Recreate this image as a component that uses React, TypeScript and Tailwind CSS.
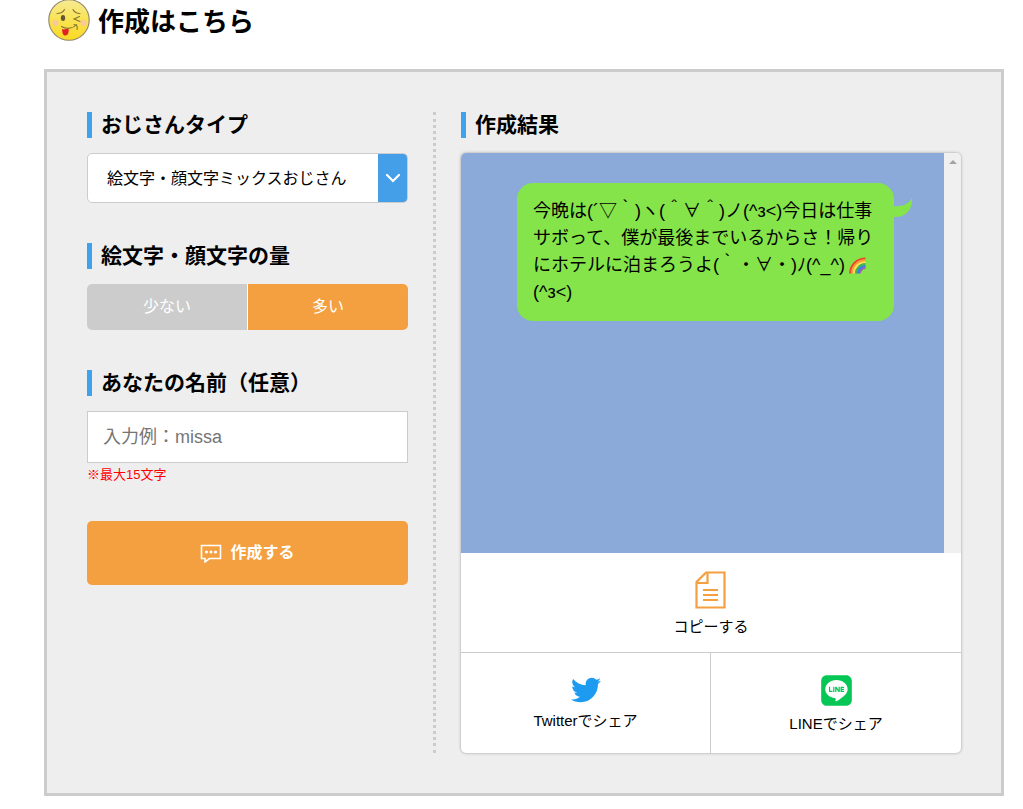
import { useState } from 'react';
import type { ReactNode } from 'react';
import { FaLine, FaTwitter } from 'react-icons/fa';

const OJISAN_TYPES = [
  '絵文字・顔文字ミックスおじさん',
  '絵文字おじさん',
  '顔文字おじさん',
];

const RESULT_LINES = [
  '今晩は(´▽｀)ヽ(＾∀＾)ノ(^з<)今日は仕事',
  'サボって、僕が最後までいるからさ！帰り',
  'にホテルに泊まろうよ(｀・∀・)ﾉ(^_^)',
  '(^з<)',
];

function FaceIcon() {
  return (
    <svg viewBox="0 0 42 42" className="size-[42px] shrink-0" aria-hidden="true">
      <defs>
        <linearGradient id="face" x1="0" y1="0" x2="0" y2="1">
          <stop offset="0" stopColor="#f6ea94" />
          <stop offset="0.5" stopColor="#f9e352" />
          <stop offset="1" stopColor="#fbd823" />
        </linearGradient>
      </defs>
      <circle cx="21" cy="20" r="20.2" fill="url(#face)" stroke="#8f8468" strokeWidth="1.1" />
      <circle cx="7.500" cy="23" r="3" fill="#fbc6a0" />
      <circle cx="35.500" cy="23" r="3" fill="#fbc6a0" />
      <ellipse cx="15" cy="18" rx="2.2" ry="3" fill="#655735" />
      <g fill="none" stroke="#87743a" strokeWidth="1.1" strokeLinecap="round">
        <path d="M9 13.500c3 0 6-1 7.500-4" />
        <path d="M25 9.500c1.500 3 4 4 7 4" />
        <path d="M31.500 16.500l-5.500 2.500 6 2.500" />
        <path d="M13.500 26.500c5 3 12 2 15-2M26 24.500c2.500 0 4 2 3 5" />
      </g>
      <path d="M14 29c2 1 4 0 6.500-.5.6 3-.2 7-3 7-2.600 0-3-2-3.500-6.500z" fill="#e01f26" />
    </svg>
  );
}

function CommentIcon() {
  return (
    <svg viewBox="0 0 22 19" className="h-[19px] w-[22px]" aria-hidden="true">
      <path d="M1.500 1.500h19v13H9.500l-4.500 3.500v-3.500H1.500z" fill="none" stroke="#fff" strokeWidth="1.6" />
      <g fill="#fff">
        <circle cx="6.500" cy="8" r="1.600" />
        <circle cx="11" cy="8" r="1.600" />
        <circle cx="15.500" cy="8" r="1.600" />
      </g>
    </svg>
  );
}

function CopyIcon() {
  return (
    <svg viewBox="0 0 32 38" className="h-[38px] w-8" fill="none" stroke="#f4a040" strokeWidth="2.200" aria-hidden="true">
      <path d="M11 1.500H29.500v35H1.500V11z" />
      <path d="M12.500 1.500v10.500H1.500" />
      <path d="M8 19H23M8 24H23M8 29H23" strokeWidth="2" />
    </svg>
  );
}

function RainbowIcon() {
  const bands = ['#f0442f', '#fb9a33', '#ffe25a', '#45b649', '#2d7ff0', '#9a5fb5'];
  return (
    <svg viewBox="0 0 17 17" className="ml-1 inline-block size-[17px] align-[-3px]" role="img" aria-label="虹">
      {bands.map((color, i) => (
        <path
          key={color}
          d={`M${1.2 + i * 1.9} 16.500C${1.2 + i * 1.9} ${8 + i * 1.2} ${8 + i} ${1.5 + i * 1.9} 16.500 ${1.5 + i * 1.9}`}
          fill="none"
          stroke={color}
          strokeWidth="2.200"
        />
      ))}
    </svg>
  );
}

function Heading({ children }: { children: ReactNode }) {
  return (
    <h3 className="mb-[15px] border-l-[5px] border-[#3ea2ec] pl-[9px] text-[21px] leading-[26px] font-bold">
      {children}
    </h3>
  );
}

export default function App() {
  const [type, setType] = useState(OJISAN_TYPES[0]);
  const [amount, setAmount] = useState<'few' | 'many'>('many');
  const [name, setName] = useState('');

  return (
    <main className="bg-white pr-[19px] pb-3 pl-11 font-['Liberation_Sans','Noto_Sans_CJK_JP',sans-serif] text-black">
      <h2 className="mb-[27px] flex h-[42px] items-center gap-2 pl-1 text-[26px] font-bold">
        <FaceIcon />
        <span className="pt-0.5">作成はこちら</span>
      </h2>

      <div className="grid grid-cols-[349fr_525fr] border-[3px] border-[#ccc] bg-[#eee] p-10">
        {/* Settings */}
        <form
          className="border-r-[3px] border-dotted border-[#ccc] pr-[25px]"
          onSubmit={(e) => e.preventDefault()}
        >
          <Heading>
            <label htmlFor="type">おじさんタイプ</label>
          </Heading>
          <div className="relative mb-10">
            <select
              id="type"
              value={type}
              onChange={(e) => setType(e.target.value)}
              className="h-[50px] w-full appearance-none rounded-[5px] border border-[#ccc] bg-white pt-0.5 pr-9 pl-[19px] text-base"
            >
              {OJISAN_TYPES.map((t) => (
                <option key={t}>{t}</option>
              ))}
            </select>
            <span className="pointer-events-none absolute inset-y-px right-px flex w-[29px] items-center justify-center rounded-r bg-[#449ee8]">
              <svg viewBox="0 0 16 10" className="h-[10px] w-4" aria-hidden="true">
                <path d="M2 2l6 6 6-6" fill="none" stroke="#fff" strokeWidth="2.200" strokeLinecap="round" />
              </svg>
            </span>
          </div>

          <Heading>絵文字・顔文字の量</Heading>
          <div className="mb-10 grid h-[46px] grid-cols-2 gap-px overflow-hidden rounded-[5px] bg-white text-base text-white">
            <button
              type="button"
              onClick={() => setAmount('few')}
              className={amount === 'few' ? 'bg-[#f4a040]' : 'bg-[#ccc]'}
            >
              少ない
            </button>
            <button
              type="button"
              onClick={() => setAmount('many')}
              className={amount === 'many' ? 'bg-[#f4a040]' : 'bg-[#ccc]'}
            >
              多い
            </button>
          </div>

          <Heading>
            <label htmlFor="name">あなたの名前（任意）</label>
          </Heading>
          <input
            id="name"
            type="text"
            maxLength={15}
            value={name}
            onChange={(e) => setName(e.target.value)}
            placeholder="入力例：missa"
            className="block h-[52px] w-full border border-[#ccc] bg-white px-[15px] text-lg placeholder:text-[#757575]"
          />
          <p className="mb-[34px] text-[13px] leading-6 text-[#f00]">※最大15文字</p>

          <button
            type="submit"
            className="flex h-16 w-full items-center justify-center gap-2 rounded-[5px] bg-[#f4a040] text-base font-bold text-white"
          >
            <CommentIcon />
            作成する
          </button>
        </form>

        {/* Result */}
        <section className="ml-[25px]">
          <Heading>作成結果</Heading>
          <div className="overflow-hidden rounded-[5px] bg-white shadow-[0_0_3px_#999]">
            <div className="flex h-[400px]">
              <div className="flex-1 bg-[#8caad9] pt-[30px] pr-[50px] pl-14">
                <div className="relative rounded-2xl bg-[#85e449] px-4 py-[15px] text-lg leading-[27px]">
                  {RESULT_LINES.map((line, i) => (
                    <p key={i} className="whitespace-nowrap">
                      {line}
                      {i === 2 && <RainbowIcon />}
                    </p>
                  ))}
                  <svg viewBox="0 0 20 20" className="absolute top-[15px] -right-[19px] size-5" aria-hidden="true">
                    <path d="M0 8C9 9 16 6 19 0C20 12 12 20 0 19z" fill="#85e449" />
                  </svg>
                </div>
              </div>
              <div className="flex w-[17px] justify-center bg-[#f0f0f0] pt-[7px]">
                <svg viewBox="0 0 8 4" className="h-1 w-2" aria-hidden="true">
                  <path d="M4 0l4 4H0z" fill="#a3a3a3" />
                </svg>
              </div>
            </div>

            <button type="button" className="flex h-[99px] w-full flex-col items-center pt-[18px] text-[15px]">
              <CopyIcon />
              <span className="mt-2 leading-5">コピーする</span>
            </button>
            <div className="grid h-[101px] grid-cols-2 border-t border-[#ccc] text-[15px]">
              <a href="#twitter" className="flex flex-col items-center border-r border-[#ccc] pt-[22px]">
                <FaTwitter className="size-[30px] text-[#1d9bf0]" />
                <span className="mt-[6px] leading-5">Twitterでシェア</span>
              </a>
              <a href="#line" className="flex flex-col items-center pt-5">
                <FaLine className="size-[35px] text-[#06c755]" />
                <span className="mt-[6px] leading-5">LINEでシェア</span>
              </a>
            </div>
          </div>
        </section>
      </div>
    </main>
  );
}
